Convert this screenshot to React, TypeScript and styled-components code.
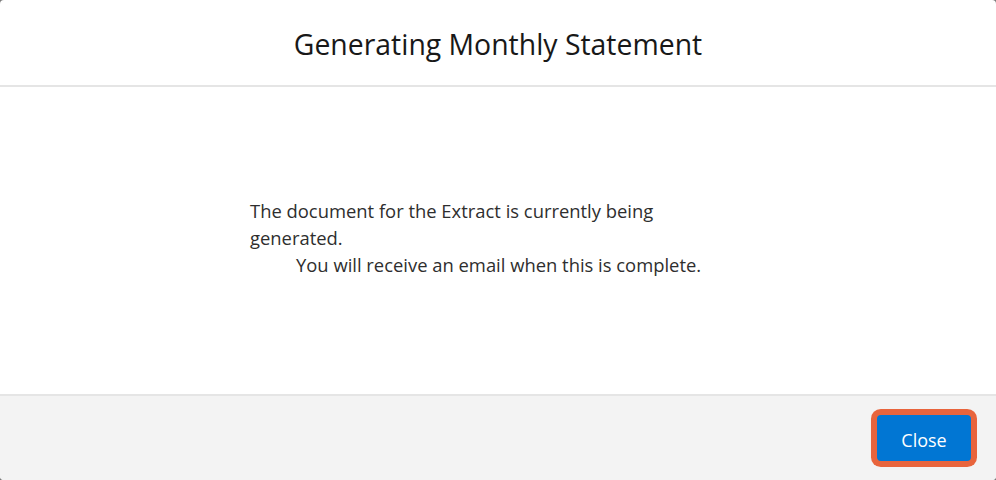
import React from "react";
import styled, { createGlobalStyle } from "styled-components";

const Global = createGlobalStyle`
  html, body { margin: 0; padding: 0; background: #7a7a7a; }
  body { font-family: "Open Sans", "Noto Sans", sans-serif; }
  * { box-sizing: border-box; }
`;

const Modal = styled.div`
  width: 996px;
  height: 480px;
  background: #ffffff;
  border-radius: 4px;
  overflow: hidden;
  display: flex;
  flex-direction: column;
`;

const Header = styled.header`
  height: 87px;
  flex: none;
  display: flex;
  align-items: center;
  justify-content: center;
  border-bottom: 2px solid #e5e5e5;
`;

const Title = styled.h1`
  margin: 0;
  padding-top: 2px;
  font-weight: 400;
  font-size: 28.4px;
  color: #181818;
`;

const Body = styled.main`
  flex: 1;
  display: flex;
  align-items: center;
  justify-content: center;
`;

const Message = styled.div`
  width: 496px;
  padding-right: 24px;
  padding-bottom: 6px;
  font-size: 18.4px;
  line-height: 27px;
  color: #2e2e2e;
`;

const Indented = styled.span`
  display: block;
  padding-left: 46px;
`;

const Footer = styled.footer`
  height: 86px;
  flex: none;
  background: #f3f3f3;
  border-top: 2px solid #e5e5e5;
  display: flex;
  align-items: center;
  justify-content: flex-end;
  padding-right: 25px;
`;

const Button = styled.button`
  width: 94px;
  height: 46px;
  border: none;
  border-radius: 4px;
  background: #0176d3;
  color: #ffffff;
  font-family: inherit;
  font-size: 18px;
  padding: 3px 0 0;
  box-shadow: 0 0 0 6px #e8643c;
  cursor: pointer;
`;

export default function App() {
  return (
    <>
      <Global />
      <Modal>
        <Header>
          <Title>Generating Monthly Statement</Title>
        </Header>
        <Body>
          <Message>
            The document for the Extract is currently being generated.
            <Indented>You will receive an email when this is complete.</Indented>
          </Message>
        </Body>
        <Footer>
          <Button>Close</Button>
        </Footer>
      </Modal>
    </>
  );
}
